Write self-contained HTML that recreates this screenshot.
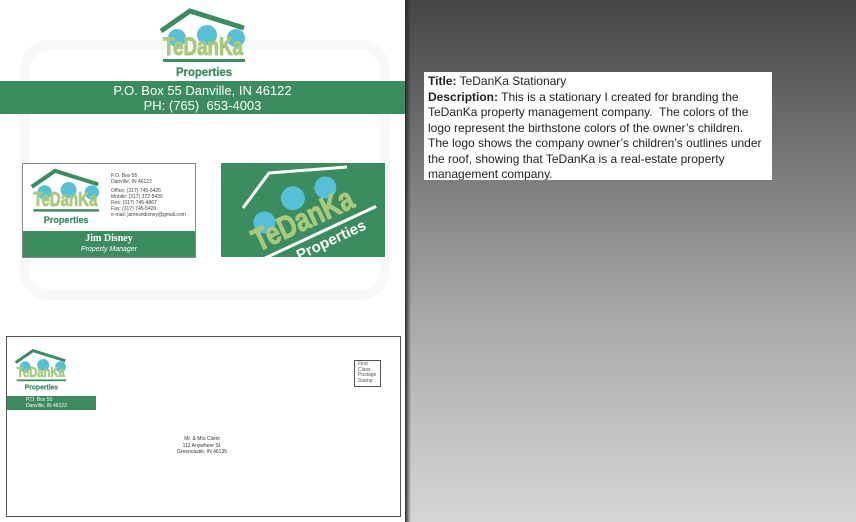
<!DOCTYPE html>
<html><head><meta charset="utf-8"><style>
*{margin:0;padding:0}
body{width:856px;height:522px;overflow:hidden;position:relative;background:#fff;font-family:"Liberation Sans",sans-serif}
.abs{position:absolute}
#right{left:405px;top:0;width:451px;height:522px;background:linear-gradient(#454545,#6e6e6e 25%,#a8a8a8 60%,#d6d6d6)}
#shadow{left:405px;top:0;width:6px;height:522px;background:linear-gradient(90deg,#2a2a2a,rgba(60,60,60,0))}
#desc{left:424px;top:72px;width:340px;height:104px;background:#fff;padding:2px 4px 2px 4px;font-size:12px;line-height:15.5px;color:#222;white-space:nowrap;overflow:hidden}
.green{background:#3b8c5e}
.tk{font-weight:bold;fill:#a9c97d;stroke:#a9c97d;stroke-width:1}
.pr{font-weight:bold;fill:#3b8c5e;stroke:#3b8c5e;stroke-width:0.3}
</style></head><body>
<div class="abs" style="left:20px;top:40px;width:370px;height:260px;border:10px solid #f8f8f8;border-radius:30px;box-sizing:border-box"></div>

<!-- main logo -->
<svg class="abs" style="left:155px;top:5px" width="100" height="75" viewBox="155 5 100 75">
<path d="M161 31 L190 11 L244 28" fill="none" stroke="#3b8c5e" stroke-width="5"/>
<circle cx="177" cy="38" r="9" fill="#56c0d6"/><circle cx="207" cy="35" r="10" fill="#56c0d6"/><circle cx="236" cy="38" r="9" fill="#56c0d6"/>
<text class="tk" x="203" y="55" text-anchor="middle" font-size="25" textLength="80" lengthAdjust="spacingAndGlyphs">TeDanKa</text>
<rect x="163" y="59" width="82" height="3" fill="#3b8c5e"/>
<text class="pr" x="204" y="76" text-anchor="middle" font-size="12" textLength="56" lengthAdjust="spacingAndGlyphs">Properties</text>
</svg>
<div class="abs green" style="left:0;top:81px;width:405px;height:33px;color:#fff;text-align:center;font-size:13px;line-height:15px;padding-top:2px;box-sizing:border-box">P.O. Box 55 Danville, IN 46122<br>PH: (765)&nbsp; 653-4003</div>

<!-- card 1 -->
<div class="abs" style="left:22px;top:163px;width:174px;height:95px;border:1px solid #888;box-sizing:border-box;background:#fff"></div>
<svg class="abs" style="left:27px;top:165px" width="80" height="62" viewBox="155 5 100 75">
<path d="M161 31 L190 11 L244 28" fill="none" stroke="#3b8c5e" stroke-width="5"/>
<circle cx="177" cy="38" r="9" fill="#56c0d6"/><circle cx="207" cy="35" r="10" fill="#56c0d6"/><circle cx="236" cy="38" r="9" fill="#56c0d6"/>
<text class="tk" x="203" y="55" text-anchor="middle" font-size="25" textLength="80" lengthAdjust="spacingAndGlyphs">TeDanKa</text>
<rect x="163" y="59" width="82" height="3" fill="#3b8c5e"/>
<text class="pr" x="204" y="76" text-anchor="middle" font-size="12" textLength="56" lengthAdjust="spacingAndGlyphs">Properties</text>
</svg>
<div class="abs" style="left:111px;top:173px;font-size:5px;line-height:6px;color:#444">P.O. Box 55<br>Danville, IN 46122<div style="height:3px"></div>Office: (317) 745-5426<br>Mobile: (317) 372-5439<br>Res: (317) 745-4867<br>Fax: (317) 745-5429<br>e-mail: jamesndisney@gmail.com</div>
<div class="abs green" style="left:23px;top:231px;width:172px;height:26px;color:#fff;text-align:center">
<div style="font-family:'Liberation Serif',serif;font-weight:bold;font-size:10px;line-height:12px;margin-top:2px">Jim Disney</div>
<div style="font-style:italic;font-size:7px;line-height:9px">Property Manager</div></div>

<!-- card 2 -->
<div class="abs green" style="left:221px;top:163px;width:164px;height:94px;overflow:hidden">
<svg width="164" height="94" viewBox="0 0 164 94">
<path d="M22 45 L48 10 L126 4" fill="none" stroke="#fff" stroke-width="3"/>
<g transform="translate(0,-7) rotate(-25 80 55)">
<circle cx="42" cy="50" r="11" fill="#56c0d6"/><circle cx="78" cy="40" r="12" fill="#56c0d6"/><circle cx="112" cy="44" r="11" fill="#56c0d6"/>
<text class="tk" x="78" y="74" text-anchor="middle" font-size="32" textLength="108" lengthAdjust="spacingAndGlyphs">TeDanKa</text>
<rect x="25" y="81" width="125" height="3" fill="#fff"/>
<text x="95" y="99" text-anchor="middle" font-weight="bold" font-size="15" fill="#fff" textLength="75" lengthAdjust="spacingAndGlyphs">Properties</text>
</g></svg></div>

<!-- envelope -->
<div class="abs" style="left:6px;top:336px;width:395px;height:181px;border:1px solid #555;box-sizing:border-box"></div>
<svg class="abs" style="left:12px;top:347px" width="60" height="45" viewBox="155 5 100 75">
<path d="M161 31 L190 11 L244 28" fill="none" stroke="#3b8c5e" stroke-width="5"/>
<circle cx="177" cy="38" r="9" fill="#56c0d6"/><circle cx="207" cy="35" r="10" fill="#56c0d6"/><circle cx="236" cy="38" r="9" fill="#56c0d6"/>
<text class="tk" x="203" y="55" text-anchor="middle" font-size="25" textLength="80" lengthAdjust="spacingAndGlyphs">TeDanKa</text>
<rect x="163" y="59" width="82" height="3" fill="#3b8c5e"/>
<text class="pr" x="204" y="76" text-anchor="middle" font-size="12" textLength="56" lengthAdjust="spacingAndGlyphs">Properties</text>
</svg>
<div class="abs green" style="left:7px;top:396px;width:89px;height:14px;color:#fff;font-size:5px;line-height:6px;padding:1px 0 0 19px;box-sizing:border-box">P.O. Box 55<br>Danville, IN 46122</div>
<div class="abs" style="left:354px;top:360px;width:27px;height:27px;border:1px solid #555;box-sizing:border-box;font-size:5px;line-height:5.5px;color:#555;padding:1px 0 0 3px">First<br>Class<br>Postage<br>Stamp</div>
<div class="abs" style="left:152px;top:436px;width:100px;text-align:center;font-size:5px;line-height:6.5px;color:#333">Mr. &amp; Mrs Client<br>112 Anywhere St.<br>Greencastle, IN 46135</div>

<div id="right" class="abs"></div>
<div id="shadow" class="abs"></div>
<div id="desc" class="abs"><b>Title:</b> TeDanKa Stationary<br><b>Description:</b> This is a stationary I created for branding the<br>TeDanKa property management company.&nbsp; The colors of the<br>logo represent the birthstone colors of the owner’s children.<br>The logo shows the company owner’s children’s outlines under<br>the roof, showing that TeDanKa is a real-estate property<br>management company.</div>
</body></html>
